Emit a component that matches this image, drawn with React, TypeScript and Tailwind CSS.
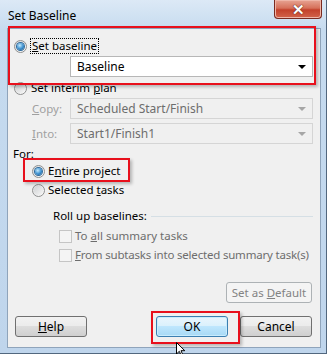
import React from "react";

const font = { fontFamily: '"Noto Sans", "Open Sans", sans-serif' };

function Radio({ checked }: { checked?: boolean }) {
  return (
    <span className="flex h-[13px] w-[13px] shrink-0 items-center justify-center rounded-full border border-[#8e8f8f] bg-[linear-gradient(135deg,#d9dadb,#fbfbfb)]">
      {checked ? (
        <span className="h-[7px] w-[7px] rounded-full bg-[radial-gradient(circle_at_40%_35%,#c4ecff,#3b8fcf_55%,#17507f)] shadow-[0_0_0_1px_#2d6a9c]" />
      ) : (
        <span className="h-[9px] w-[9px] rounded-full bg-[linear-gradient(135deg,#cfd1d3,#f6f6f6)]" />
      )}
    </span>
  );
}

function Checkbox() {
  return <span className="h-[13px] w-[13px] shrink-0 border border-[#c5c5c5] bg-[#f4f4f4]" />;
}

function Combo({ value, disabled }: { value: string; disabled?: boolean }) {
  return (
    <div
      className={`flex h-[21px] w-[243px] items-center justify-between pl-[6px] pr-[6px] text-[12px] ${
        disabled ? "border border-[#d5d5d5] bg-[#f0f0f0] text-[#6d6d6d]" : "border border-[#b7b7b7] bg-white text-black"
      }`}
    >
      <span className="whitespace-nowrap">{value}</span>
      <span
        className={`h-0 w-0 border-x-[4px] border-t-[4px] border-x-transparent ${
          disabled ? "border-t-[#a6a6a6]" : "border-t-black"
        }`}
      />
    </div>
  );
}

function Button({ children, primary, disabled, w }: { children: React.ReactNode; primary?: boolean; disabled?: boolean; w: string }) {
  let cls = "border-[#707070] bg-[linear-gradient(#f2f2f2_0%,#ebebeb_50%,#dddddd_50%,#cfcfcf_100%)] text-black";
  if (primary)
    cls = "border-[#3c7fb1] bg-[linear-gradient(#eaf6fd_0%,#d9f0fc_50%,#bee6fd_50%,#a7d9f5_100%)] text-black shadow-[inset_0_0_0_1px_#c9ecfd]";
  if (disabled) cls = "border-[#adb2b5] bg-[#f4f4f4] text-[#838383]";
  return (
    <div className={`flex h-[21px] ${w} items-center justify-center whitespace-nowrap rounded-[3px] border ${cls}`}>{children}</div>
  );
}

export default function App() {
  return (
    <div className="relative h-[354px] w-[330px] overflow-hidden bg-white text-[11.5px] leading-none text-black" style={font}>
      {/* window frame */}
      <div className="flex h-[354px] w-[327px] flex-col border-b border-r border-[#52677e] bg-[linear-gradient(#dce9f6,#c6dbef_30px,#bfd5ec)]">
        {/* title bar */}
        <div className="flex h-[28px] shrink-0 items-start justify-between">
          <span className="pl-[8px] pt-[10px] text-[12px] text-black">Set Baseline</span>
          <div className="mr-[4px] flex h-[19px] w-[48px] items-center justify-center rounded-b-[4px] border border-t-0 border-[#7a2a20] bg-[linear-gradient(#e7a493,#d6705a_45%,#c3412b_55%,#d2644b)] shadow-[inset_0_0_0_1px_#efb6a8]">
            <span className="text-[15px] font-bold leading-none text-white [text-shadow:0_0_1px_#5a1a10,0_0_1px_#5a1a10]">✕</span>
          </div>
        </div>
        {/* client */}
        <div className="ml-[7px] mr-[5px] flex h-[320px] flex-col whitespace-nowrap border border-[#8fa4bb] bg-[#f0f0f0]">
          <div className="mt-[9px] flex h-[16px] items-center pl-[6px]">
            <Radio checked />
            <span className="ml-[3px] border border-dotted border-black px-[1px] py-[1px]">
              <u>S</u>et baseline
            </span>
          </div>
          <div className="ml-[62px] mt-[2px]">
            <Combo value="Baseline" />
          </div>
          <div className="mt-[3px] flex h-[16px] items-center pl-[6px]">
            <Radio />
            <span className="ml-[4px]">
              Set interim <u>p</u>lan
            </span>
          </div>
          <div className="mt-[2px] flex items-center">
            <span className="w-[62px] pl-[24px] text-[#a0a0a0]">
              <u>C</u>opy:
            </span>
            <Combo value="Scheduled Start/Finish" disabled />
          </div>
          <div className="mt-[4px] flex items-center">
            <span className="w-[62px] pl-[24px] text-[#a0a0a0]">
              <u>I</u>nto:
            </span>
            <Combo value="Start1/Finish1" disabled />
          </div>
          <div className="mt-[2px] flex h-[16px] items-center pl-[5px]">For:</div>
          <div className="mt-[1px] flex h-[16px] items-center pl-[24px]">
            <Radio checked />
            <span className="ml-[3px]">
              E<u>n</u>tire project
            </span>
          </div>
          <div className="mt-[3px] flex h-[16px] items-center pl-[24px]">
            <Radio />
            <span className="ml-[3px]">
              Selected <u>t</u>asks
            </span>
          </div>
          <div className="mt-[10px] flex h-[16px] items-center pl-[45px] pr-[7px]">
            <span>Roll up baselines:</span>
            <span className="ml-[4px] h-px flex-1 bg-[#d5dfe5]" />
          </div>
          <div className="mt-[4px] flex h-[16px] items-center pl-[51px] text-[#6d6d6d]">
            <Checkbox />
            <span className="ml-[3px]">
              To <u>a</u>ll summary tasks
            </span>
          </div>
          <div className="mt-[3px] flex h-[16px] items-center pl-[51px] text-[#6d6d6d]">
            <Checkbox />
            <span className="ml-[3px] tracking-[-0.2px]">
              <u>F</u>rom subtasks into selected summary task(s)
            </span>
          </div>
          <div className="mr-[8px] mt-[19px] flex justify-end">
            <Button disabled w="w-[86px]">
              Set as&nbsp;<u>D</u>efault
            </Button>
          </div>
          <div className="mt-[13px] flex items-center pl-[7px] pr-[8px] text-[12px]">
            <Button w="w-[73px]">
              <u>H</u>elp
            </Button>
            <div className="ml-[69px]">
              <Button primary w="w-[72px]">
                OK
              </Button>
            </div>
            <div className="ml-[12px]">
              <Button w="w-[72px]">Cancel</Button>
            </div>
          </div>
        </div>
      </div>

      {/* annotation boxes */}
      <div className="absolute left-[8px] top-[26px] h-[59px] w-[308px] border-2 border-[#e8101c] shadow-[2px_2px_3px_rgba(0,0,0,0.25)]" />
      <div className="absolute left-[23px] top-[158px] h-[24px] w-[107px] border-2 border-[#e8101c] shadow-[2px_2px_3px_rgba(0,0,0,0.25)]" />
      <div className="absolute left-[151px] top-[311px] h-[33px] w-[89px] border-2 border-[#e8101c] shadow-[2px_2px_3px_rgba(0,0,0,0.25)]" />

      {/* mouse pointer */}
      <svg className="absolute left-[176px] top-[342px]" width="10" height="14" viewBox="0 0 10 14">
        <path d="M0.5 0.5 L0.5 12 L3.3 9.3 L5.2 13.5 L6.8 12.8 L5 8.7 L8.8 8.7 Z" fill="white" stroke="black" strokeWidth="1" />
      </svg>
    </div>
  );
}
